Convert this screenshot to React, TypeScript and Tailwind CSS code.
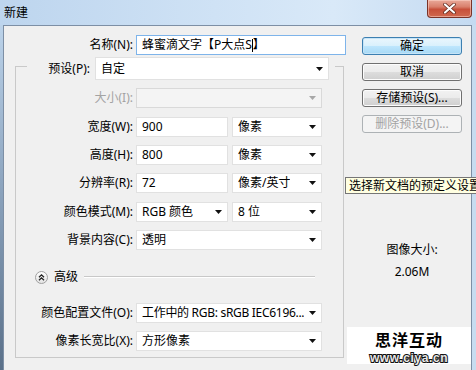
import React from "react";

const Arrow = ({ disabled }: { disabled?: boolean }) => (
  <svg width="7" height="4" viewBox="0 0 7 4" className="shrink-0">
    <path d="M0 0H7L3.5 4Z" fill={disabled ? "#a8a8a8" : "#111"} />
  </svg>
);

const Combo = ({
  w,
  children,
  disabled,
  tall,
  textCls,
}: {
  w: string;
  children?: React.ReactNode;
  disabled?: boolean;
  tall?: boolean;
  textCls?: string;
}) => (
  <div
    className={[
      w,
      tall ? "h-[23px]" : "h-[20px]",
      "flex items-center justify-between pl-[5px] pr-[5px] border shrink-0",
      disabled ? "bg-[#f4f4f4] border-[#d9d9d9]" : "bg-white border-[#e1e1e1]",
    ].join(" ")}
  >
    <span className={["whitespace-nowrap overflow-hidden leading-[18px]", textCls ?? ""].join(" ")}>{children}</span>
    <Arrow disabled={disabled} />
  </div>
);

const Input = ({ w, children }: { w: string; children?: React.ReactNode }) => (
  <div className={[w, "h-[20px] flex items-center pl-[5px] bg-white border border-[#e1e1e1] shrink-0 leading-[18px]"].join(" ")}>
    {children}
  </div>
);

const Row = ({ label, children, disabled }: { label: string; children: React.ReactNode; disabled?: boolean }) => (
  <div className="flex items-center h-[20px]">
    <div className={["w-[120px] pr-[3px] text-right whitespace-nowrap leading-[20px]", disabled ? "text-[#a3a3a3]" : ""].join(" ")}>
      {label}
    </div>
    {children}
  </div>
);

const Btn = ({ children, kind }: { children: React.ReactNode; kind?: "default" | "disabled" }) => {
  const cls =
    kind === "default"
      ? "border-[#3c7fb1] bg-[linear-gradient(to_bottom,#eaf6fd_0%,#d9f0fc_50%,#bee6fd_50%,#a7d9f5_100%)] text-black shadow-[inset_0_0_0_1px_#c6e4f7]"
      : kind === "disabled"
      ? "border-[#adb2b5] bg-[#f4f4f4] text-[#a3a3a3]"
      : "border-[#707070] bg-[linear-gradient(to_bottom,#f2f2f2_0%,#ebebeb_50%,#dddddd_50%,#cfcfcf_100%)] text-black shadow-[inset_0_0_0_1px_#fcfcfc]";
  return (
    <div className={["h-[18px] w-[100px] rounded-[3px] border flex items-center justify-center leading-[16px] whitespace-nowrap", cls].join(" ")}>
      {children}
    </div>
  );
};

export default function App() {
  return (
    <div className="relative w-[476px] h-[370px] overflow-hidden flex flex-col text-[12px] text-black font-['Noto_Sans','Noto_Sans_CJK_SC',sans-serif] bg-[#c4daf1]">
      {/* Title bar */}
      <div className="h-[25px] shrink-0 flex items-start justify-between bg-[linear-gradient(to_right,#bdd5ee_0%,#cfe2f5_45%,#d9e9f8_70%,#c4daf1_100%)]">
        <div className="pl-[4px] pt-[5px] leading-[16px]">新建</div>
        <div className="mr-[4px] w-[45px] h-[18px] rounded-b-[4px] border border-t-0 border-[#7a3328] bg-[linear-gradient(to_bottom,#e9a999_0%,#d9806c_40%,#c7503a_55%,#d0694f_100%)] flex items-center justify-center shadow-[inset_0_0_0_1px_rgba(255,220,210,0.5)]">
          <svg width="13" height="11" viewBox="0 0 13 11">
            <path d="M2 1.5L11 9.5M11 1.5L2 9.5" stroke="#5a2418" strokeWidth="3.6" strokeLinecap="round" />
            <path d="M2 1.5L11 9.5M11 1.5L2 9.5" stroke="#ffffff" strokeWidth="2.2" strokeLinecap="round" />
          </svg>
        </div>
      </div>

      {/* Frame + body */}
      <div className="flex-1 flex">
        <div className="w-[3px] bg-[linear-gradient(to_bottom,#bcd3ea_0%,#8ea6c0_45%,#5a7089_100%)]" />
        <div className="flex-1 flex bg-[#f0f0f0] border-l border-t border-r border-[#7d8fa5]">
          {/* Left column */}
          <div className="w-[358px] shrink-0 flex flex-col">
            <div className="flex items-center h-[20px] mt-[9px]">
              <div className="w-[132px] pr-[3px] text-right leading-[20px]">名称(N):</div>
              <div className="w-[210px] h-[20px] flex items-center pl-[5px] bg-white border border-[#7eb4ea] leading-[18px] whitespace-nowrap">
                蜂蜜滴文字【P大点S<span className="inline-block w-[1px] h-[13px] bg-black" />】
              </div>
            </div>

            <fieldset className="ml-[11px] mt-[2px] w-[329px] h-[301px] border border-[#c9c9c9] flex flex-col">
              <legend className="ml-[11px] h-[19px] p-0">
                <div className="flex items-start w-[308px]">
                  <div className="w-[68px] pr-[5px] text-right leading-[23px] whitespace-nowrap">预设(P):</div>
                  <Combo w="w-[234px]" tall>
                    自定
                  </Combo>
                </div>
              </legend>

              <div className="mt-[12px]">
                <Row label="大小(I):" disabled>
                  <Combo w="w-[186px]" disabled />
                </Row>
              </div>
              <div className="mt-[9px]">
                <Row label="宽度(W):">
                  <Input w="w-[92px]">900</Input>
                  <div className="w-[4px]" />
                  <Combo w="w-[90px]">像素</Combo>
                </Row>
              </div>
              <div className="mt-[8px]">
                <Row label="高度(H):">
                  <Input w="w-[92px]">800</Input>
                  <div className="w-[4px]" />
                  <Combo w="w-[90px]">像素</Combo>
                </Row>
              </div>
              <div className="mt-[8px]">
                <Row label="分辨率(R):">
                  <Input w="w-[92px]">72</Input>
                  <div className="w-[4px]" />
                  <Combo w="w-[90px]">像素/英寸</Combo>
                </Row>
              </div>
              <div className="mt-[9px]">
                <Row label="颜色模式(M):">
                  <Combo w="w-[92px]">RGB 颜色</Combo>
                  <div className="w-[4px]" />
                  <Combo w="w-[90px]">8 位</Combo>
                </Row>
              </div>
              <div className="mt-[8px]">
                <Row label="背景内容(C):">
                  <Combo w="w-[186px]">透明</Combo>
                </Row>
              </div>

              {/* Advanced */}
              <div className="mt-[20px] h-[14px] flex items-center">
                <svg width="13" height="13" viewBox="0 0 13 13" className="ml-[19px] shrink-0">
                  <defs>
                    <linearGradient id="cg" x1="0" y1="0" x2="0" y2="1">
                      <stop offset="0" stopColor="#ffffff" />
                      <stop offset="1" stopColor="#e2e2e2" />
                    </linearGradient>
                  </defs>
                  <circle cx="6.5" cy="6.5" r="6" fill="url(#cg)" stroke="#a0a0a0" />
                  <path d="M4 6.3L6.5 3.8L9 6.3M4 9.3L6.5 6.8L9 9.3" fill="none" stroke="#222" strokeWidth="1.3" />
                </svg>
                <div className="ml-[6px] leading-[14px] whitespace-nowrap">高级</div>
                <div className="ml-[6px] w-[231px] h-[2px] border-t border-[#c8c8c8] border-b border-b-white" />
              </div>

              <div className="mt-[19px]">
                <Row label="颜色配置文件(O):">
                  <Combo w="w-[186px]" textCls="tracking-[-0.3px]">
                    工作中的 RGB: sRGB IEC6196...
                  </Combo>
                </Row>
              </div>
              <div className="mt-[8px]">
                <Row label="像素长宽比(X):">
                  <Combo w="w-[186px]">方形像素</Combo>
                </Row>
              </div>
            </fieldset>
          </div>

          {/* Right column */}
          <div className="w-[100px] shrink-0 flex flex-col pt-[11px]">
            <div className="flex flex-col gap-[8px]">
              <Btn kind="default">确定</Btn>
              <Btn>取消</Btn>
              <Btn>存储预设(S)...</Btn>
              <Btn kind="disabled">删除预设(D)...</Btn>
            </div>
            <div className="mt-[107px] text-center leading-[20px]">图像大小:</div>
            <div className="mt-[2px] text-center leading-[20px]">2.06M</div>
          </div>
        </div>
        <div className="w-[4px] bg-[#c7dcf0]" />
      </div>

      {/* Tooltip */}
      <div className="absolute left-[345px] top-[177px] h-[17px] pl-[3px] pr-[4px] bg-[#ffffe1] border border-[#767676] leading-[15px] whitespace-nowrap">
        选择新文档的预定义设置
      </div>

      {/* Watermark */}
      <div className="absolute left-[347px] top-[327px] w-[124px] h-[37px] bg-white flex flex-col items-center">
        <div className="mt-[4px] text-[16px] leading-[16px] font-bold tracking-[1px] text-black font-['Noto_Sans_CJK_SC',sans-serif]">
          思洋互动
        </div>
        <div className="mt-[5px] text-[12px] leading-[12px] font-bold tracking-[0.6px] text-[#e8e8e8] font-['Liberation_Sans',sans-serif] [-webkit-text-stroke:2px_#111] [paint-order:stroke_fill]">
          www.ciya.cn
        </div>
      </div>
    </div>
  );
}
